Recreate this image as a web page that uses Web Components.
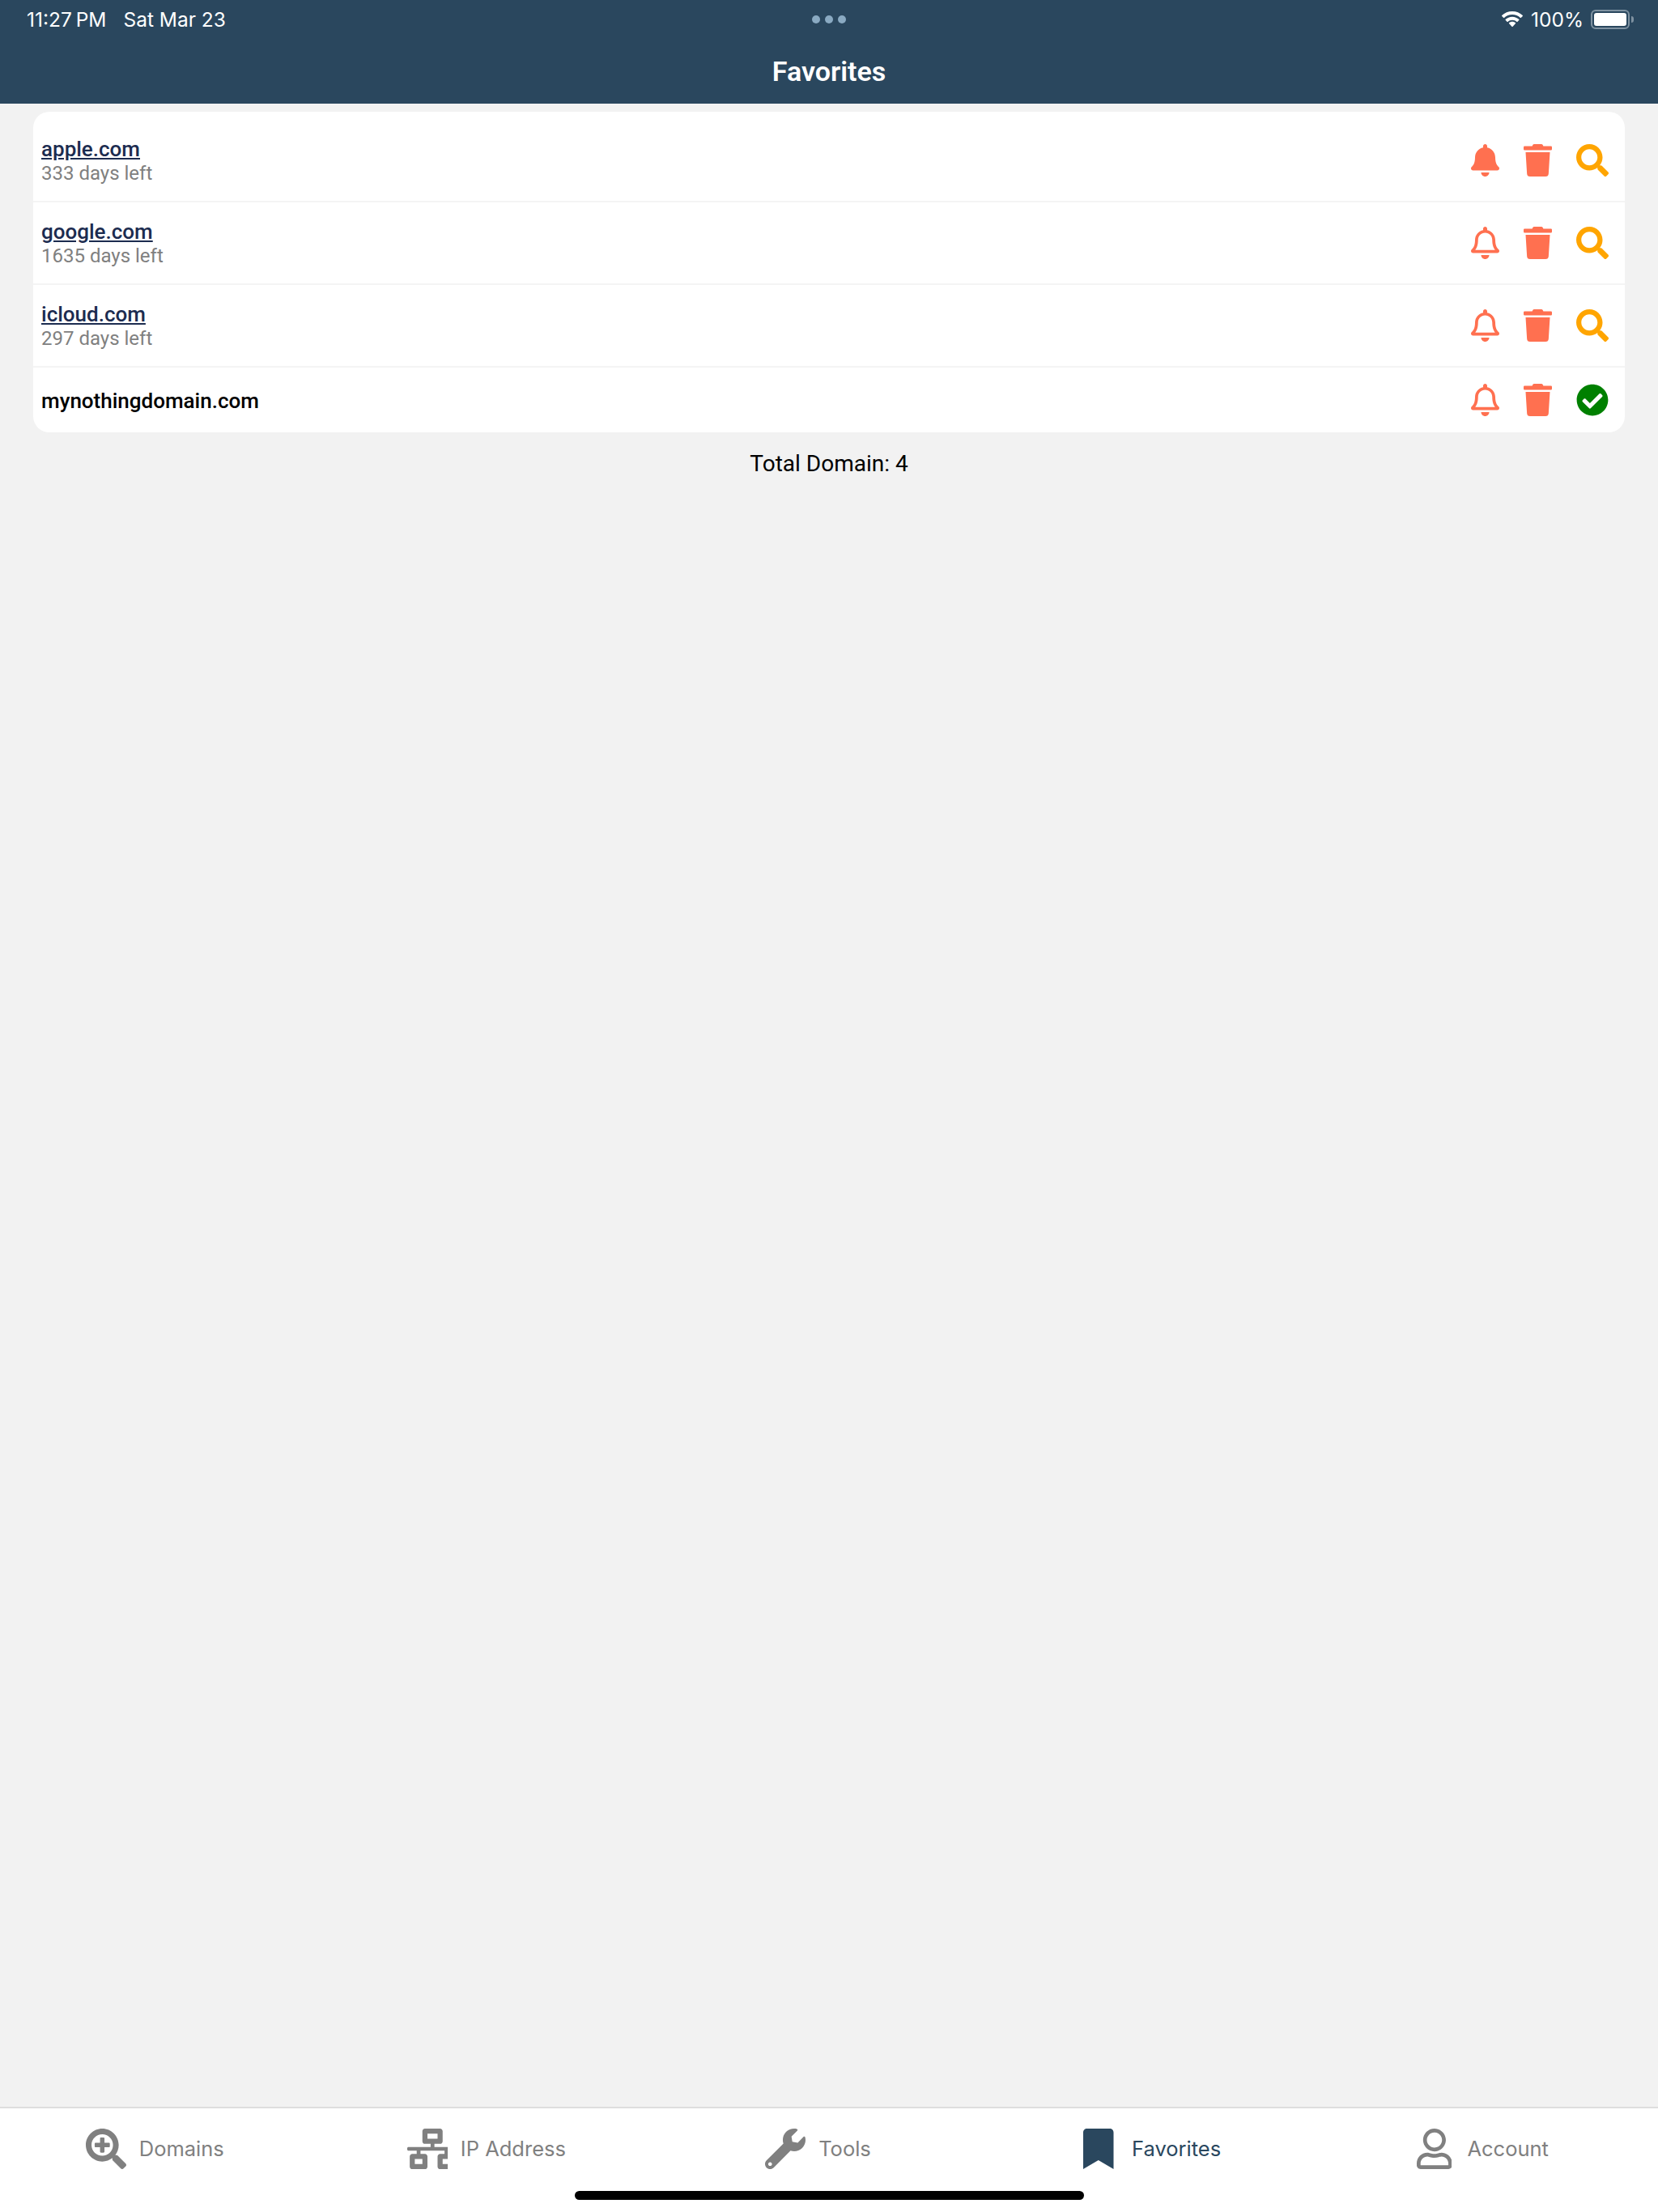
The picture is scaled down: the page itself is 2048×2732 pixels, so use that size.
<!DOCTYPE html>
<html lang="en">
<head>
<meta charset="utf-8">
<title>Favorites</title>
<style>
  html, body { margin: 0; height: 100%; background: #f2f2f2; }
  body { font-family: Roboto, "Liberation Sans", sans-serif; }
  app-shell { height: 2732px; }
</style>
</head>
<body>
<app-shell>
  <status-bar slot="top"></status-bar>
  <nav-title slot="top">Favorites</nav-title>

  <domain-list>
    <domain-row name="apple.com" days="333 days left" bell="solid" state="search"></domain-row>
    <domain-row name="google.com" days="1635 days left" bell="regular" state="search"></domain-row>
    <domain-row name="icloud.com" days="297 days left" bell="regular" state="search"></domain-row>
    <domain-row name="mynothingdomain.com" bell="regular" state="free"></domain-row>
  </domain-list>
  <total-line>Total Domain: 4</total-line>

  <tab-bar slot="bottom">
    <tab-item icon="search-plus">Domains</tab-item>
    <tab-item icon="network-wired">IP Address</tab-item>
    <tab-item icon="wrench">Tools</tab-item>
    <tab-item icon="bookmark" active>Favorites</tab-item>
    <tab-item icon="user">Account</tab-item>
  </tab-bar>
</app-shell>

<script>
// icon paths, all on a 512 high box
const ICONS = {
  "bell-solid": [448, "M224 512c35.32 0 63.97-28.65 63.97-64H160.03c0 35.35 28.65 64 63.97 64zm215.39-149.71c-19.32-20.76-55.47-51.99-55.47-154.29 0-77.7-54.48-139.9-127.94-155.16V32c0-17.67-14.32-32-31.98-32s-31.98 14.33-31.98 32v20.84C118.56 68.1 64.08 130.3 64.08 208c0 102.3-36.15 133.53-55.47 154.29-6 6.45-8.66 14.16-8.61 21.71.11 16.4 12.98 32 32.1 32h383.8c19.12 0 32-15.6 32.1-32 .05-7.55-2.61-15.27-8.61-21.71z"],
  "bell-regular": [448, "M439.39 362.29c-19.32-20.76-55.47-51.99-55.47-154.29 0-77.7-54.48-139.9-127.94-155.16V32c0-17.67-14.32-32-31.98-32s-31.98 14.33-31.98 32v20.84C118.56 68.1 64.08 130.3 64.08 208c0 102.3-36.15 133.53-55.47 154.29-6 6.45-8.66 14.16-8.61 21.71.11 16.4 12.98 32 32.1 32h383.8c19.12 0 32-15.6 32.1-32 .05-7.55-2.61-15.27-8.61-21.71zM67.53 368c21.22-27.97 44.42-74.33 44.53-159.42 0-.2-.06-.38-.06-.58 0-61.86 50.14-112 112-112s112 50.14 112 112c0 .2-.06.38-.06.58.11 85.1 23.31 131.46 44.53 159.42H67.53zM224 512c35.32 0 63.97-28.65 63.97-64H160.03c0 35.35 28.65 64 63.97 64z"],
  "trash": [448, "M432 32H312l-9.4-18.7A24 24 0 0 0 281.1 0H166.8a23.72 23.72 0 0 0-21.4 13.3L136 32H16A16 16 0 0 0 0 48v32a16 16 0 0 0 16 16h416a16 16 0 0 0 16-16V48a16 16 0 0 0-16-16zM53.2 467a48 48 0 0 0 47.9 45h245.8a48 48 0 0 0 47.9-45L416 128H32z"],
  "search": [512, "M505 442.7L405.3 343c-4.5-4.5-10.6-7-17-7H372c27.6-35.3 44-79.7 44-128C416 93.1 322.9 0 208 0S0 93.1 0 208s93.1 208 208 208c48.3 0 92.7-16.4 128-44v16.3c0 6.4 2.5 12.5 7 17l99.7 99.7c9.4 9.4 24.6 9.4 33.9 0l28.3-28.3c9.4-9.4 9.4-24.6.1-34zM208 336c-70.7 0-128-57.2-128-128 0-70.7 57.2-128 128-128 70.7 0 128 57.2 128 128 0 70.7-57.2 128-128 128z"],
  "check-circle": [512, "M504 256c0 136.967-111.033 248-248 248S8 392.967 8 256 119.033 8 256 8s248 111.033 248 248zM227.314 387.314l184-184c6.248-6.248 6.248-16.379 0-22.627l-22.627-22.627c-6.248-6.249-16.379-6.249-22.628 0L216 308.118l-70.059-70.059c-6.248-6.248-16.379-6.248-22.628 0l-22.627 22.627c-6.248 6.248-6.248 16.379 0 22.627l104 104c6.249 6.249 16.379 6.249 22.628.001z"],
  "search-plus": [512, "M304 192v32c0 6.6-5.4 12-12 12h-56v56c0 6.6-5.4 12-12 12h-32c-6.6 0-12-5.4-12-12v-56h-56c-6.6 0-12-5.4-12-12v-32c0-6.6 5.4-12 12-12h56v-56c0-6.6 5.4-12 12-12h32c6.6 0 12 5.4 12 12v56h56c6.6 0 12 5.4 12 12zm201 284.7L476.7 505c-9.4 9.4-24.6 9.4-33.9 0L343 405.3c-4.5-4.5-7-10.6-7-17V372c-35.3 27.6-79.7 44-128 44C93.1 416 0 322.9 0 208S93.1 0 208 0s208 93.1 208 208c0 48.3-16.4 92.7-44 128h16.3c6.4 0 12.5 2.5 17 7l99.7 99.7c9.3 9.4 9.3 24.6 0 34zM344 208c0-75.2-60.8-136-136-136S72 132.8 72 208s60.8 136 136 136 136-60.8 136-136z"],
  // wider than its box in the app, so it is cut off at 512
  "network-wired": [512, "M640 264v-16c0-8.84-7.16-16-16-16H344v-40h72c17.67 0 32-14.33 32-32V32c0-17.67-14.33-32-32-32H224c-17.67 0-32 14.33-32 32v128c0 17.67 14.33 32 32 32h72v40H16c-8.84 0-16 7.16-16 16v16c0 8.84 7.16 16 16 16h104v40H64c-17.67 0-32 14.33-32 32v128c0 17.67 14.33 32 32 32h160c17.67 0 32-14.33 32-32V352c0-17.67-14.33-32-32-32h-56v-40h304v40h-56c-17.67 0-32 14.33-32 32v128c0 17.67 14.33 32 32 32h160c17.67 0 32-14.33 32-32V352c0-17.67-14.33-32-32-32h-56v-40h104c8.84 0 16-7.16 16-16zM256 128V64h128v64H256zm-64 320H96v-64h96v64zm352 0h-96v-64h96v64z"],
  "wrench": [512, "M507.73 109.1c-2.24-9.03-13.54-12.09-20.12-5.51l-74.36 74.36-67.88-11.31-11.31-67.88 74.36-74.36c6.62-6.62 3.43-17.9-5.66-20.16-47.38-11.74-99.55.91-136.58 37.93-39.64 39.64-50.55 97.1-34.05 147.2L18.74 402.76c-24.99 24.99-24.99 65.51 0 90.5 24.99 24.99 65.51 24.99 90.5 0l213.21-213.21c50.12 16.71 107.47 5.68 147.37-34.22 37.07-37.07 49.7-89.32 37.91-136.73zM64 472c-13.25 0-24-10.75-24-24 0-13.26 10.75-24 24-24s24 10.74 24 24c0 13.25-10.75 24-24 24z"],
  "bookmark": [384, "M0 512V48C0 21.49 21.49 0 48 0h288c26.51 0 48 21.49 48 48v464L192 400 0 512z"],
  "user": [448, "M313.6 304c-28.7 0-42.5 16-89.6 16-47.1 0-60.8-16-89.6-16C60.2 304 0 364.2 0 438.4V464c0 26.5 21.5 48 48 48h352c26.5 0 48-21.5 48-48v-25.6c0-74.2-60.2-134.4-134.4-134.4zM400 464H48v-25.6c0-47.6 38.8-86.4 86.4-86.4 14.6 0 38.3 16 89.6 16 51.7 0 74.9-16 89.6-16 47.6 0 86.4 38.8 86.4 86.4V464zM224 288c79.5 0 144-64.5 144-144S303.5 0 224 0 80 64.5 80 144s64.5 144 144 144zm0-240c52.9 0 96 43.1 96 96s-43.1 96-96 96-96-43.1-96-96 43.1-96 96-96z"]
};

function iconSvg(name, height, color) {
  const [w, d] = ICONS[name];
  const width = w * height / 512;
  return `<svg width="${width}" height="${height}" viewBox="0 0 ${w} 512" fill="${color}" style="display:block;flex:none"><path d="${d}"/></svg>`;
}

class AppShell extends HTMLElement {
  constructor() {
    super();
    this.attachShadow({ mode: "open" });
    this.shadowRoot.innerHTML = `
      <style>
        :host { display: flex; flex-direction: column; }
        main { flex: 1; display: flex; flex-direction: column; min-height: 0; }
      </style>
      <slot name="top"></slot>
      <main><slot></slot></main>
      <slot name="bottom"></slot>
    `;
  }
}

class StatusBar extends HTMLElement {
  constructor() {
    super();
    this.attachShadow({ mode: "open" });
    this.shadowRoot.innerHTML = `
      <style>
        :host {
          display: grid;
          grid-template-columns: 1fr auto 1fr;
          align-items: center;
          height: 48px;
          padding: 0 33px;
          background: #2a475e;
          color: #fff;
          font: 400 24.5px Inter, "Liberation Sans", sans-serif;
        }
        .left { display: flex; gap: 21px; white-space: nowrap; }
        .time { word-spacing: -2px; }
        .dots { display: flex; gap: 6px; }
        .dots i { width: 10px; height: 10px; border-radius: 50%; background: #8aaac2; }
        .right { display: flex; align-items: center; justify-content: flex-end; gap: 9px; }
        .batt { position: relative; width: 48px; height: 24px; box-sizing: border-box; border: 2px solid #7f92a1; border-radius: 6px; padding: 2px; margin-right: 2px; }
        .batt b { display: block; height: 100%; background: #fff; border-radius: 3px; }
        .batt::after { content: ""; position: absolute; right: -7px; top: 6px; width: 3px; height: 8px; background: #7f92a1; border-radius: 0 3px 3px 0; }
      </style>
      <div class="left"><span class="time">11:27 PM</span><span>Sat Mar 23</span></div>
      <div class="dots"><i></i><i></i><i></i></div>
      <div class="right">
        <svg width="28" height="20" viewBox="0 0 28 20" fill="#fff"><path d="M14 4.100c3.900 0 7.400 1.500 10 4 .2.200.5.200.7 0l2.100-2.200c.2-.2.2-.6 0-.8C23.500 1.900 19 0 14 0S4.500 1.900 1.200 5.100c-.2.200-.2.600 0 .8l2.100 2.200c.2.200.5.200.7 0 2.600-2.500 6.100-4 10-4z"/><path d="M14 10.800c2.100 0 4.100.8 5.600 2.200.2.200.5.200.7 0l2.100-2.200c.2-.2.2-.6 0-.8C20.200 8 17.200 6.700 14 6.700S7.800 8 5.600 10c-.2.200-.2.600 0 .8L7.700 13c.2.200.5.200.7 0 1.500-1.400 3.500-2.200 5.600-2.200z"/><path d="M18 15.100c.2-.2.2-.6 0-.8-1.100-1-2.500-1.500-4-1.500s-2.900.5-4 1.500c-.2.200-.2.600 0 .8l3.700 3.800c.2.200.500.200.700 0z"/></svg>
        <span>100%</span>
        <div class="batt"><b></b></div>
      </div>
    `;
  }
}

class NavTitle extends HTMLElement {
  constructor() {
    super();
    this.attachShadow({ mode: "open" });
    this.shadowRoot.innerHTML = `
      <style>
        :host {
          display: flex;
          justify-content: center;
          align-items: center;
          height: 80px;
          box-sizing: border-box;
          background: #2a475e;
          color: #fff;
          font: 600 34px Roboto, sans-serif;
        }
      </style>
      <slot></slot>
    `;
  }
}

class DomainList extends HTMLElement {
  constructor() {
    super();
    this.attachShadow({ mode: "open" });
    this.shadowRoot.innerHTML = `
      <style>
        :host {
          display: block;
          margin: 10px 41px 0;
          padding-top: 10px;
          background: #fff;
          border-radius: 20px;
        }
      </style>
      <slot></slot>
    `;
  }
}

class DomainRow extends HTMLElement {
  connectedCallback() {
    if (this.shadowRoot) return;
    this.attachShadow({ mode: "open" });
    const name = this.getAttribute("name");
    const days = this.getAttribute("days");
    const bell = this.getAttribute("bell") || "regular";
    const free = this.getAttribute("state") === "free";
    const title = days ? `<a href="#">${name}</a><small>${days}</small>` : `<span>${name}</span>`;
    this.shadowRoot.innerHTML = `
      <style>
        :host {
          display: flex;
          align-items: center;
          justify-content: space-between;
          padding: 20px 20px 20px 10px;
          border-bottom: 2px solid #f4f4f4;
        }
        :host(:last-child) { border-bottom: 0; }
        .text { display: flex; flex-direction: column; }
        a, span { font: 500 26px/32px Roboto, sans-serif; }
        a { color: #1c2c50; text-decoration: underline; }
        span { color: #000; padding-top: 2px; }
        small { font: 400 24px/28px Roboto, sans-serif; color: #808080; }
        .actions { display: flex; align-items: center; gap: 30px; }
      </style>
      <div class="text">${title}</div>
      <div class="actions">
        ${iconSvg("bell-" + bell, 40, "#ff7050")}
        ${iconSvg("trash", 40, "#ff7050")}
        ${free ? iconSvg("check-circle", 40, "#008000") : iconSvg("search", 40, "#ffa500")}
      </div>
    `;
  }
}

class TotalLine extends HTMLElement {
  constructor() {
    super();
    this.attachShadow({ mode: "open" });
    this.shadowRoot.innerHTML = `
      <style>
        :host {
          display: block;
          margin-top: 23px;
          text-align: center;
          color: #000;
          font: 400 28px/32px Roboto, sans-serif;
        }
      </style>
      <slot></slot>
    `;
  }
}

class TabBar extends HTMLElement {
  constructor() {
    super();
    this.attachShadow({ mode: "open" });
    this.shadowRoot.innerHTML = `
      <style>
        :host {
          display: block;
          position: relative;
          height: 130px;
          box-sizing: border-box;
          background: #fff;
          border-top: 2px solid #dedede;
        }
        .tabs { display: grid; grid-template-columns: repeat(5, 1fr); padding-top: 25px; }
        .home { position: absolute; left: 710px; top: 102px; width: 629px; height: 11px; border-radius: 6px; background: #000; }
      </style>
      <div class="tabs"><slot></slot></div>
      <div class="home"></div>
    `;
  }
}

class TabItem extends HTMLElement {
  connectedCallback() {
    if (this.shadowRoot) return;
    this.attachShadow({ mode: "open" });
    const color = this.hasAttribute("active") ? "#2a475e" : "#808080";
    this.shadowRoot.innerHTML = `
      <style>
        :host {
          display: flex;
          align-items: center;
          justify-content: center;
          gap: 16px;
          height: 50px;
          padding-right: 27px;
          color: ${color};
          font: 400 25.5px Inter, "Liberation Sans", sans-serif;
        }
        .box { width: 50px; display: flex; justify-content: center; }
        .label { padding-bottom: 2px; }
      </style>
      <div class="box">${iconSvg(this.getAttribute("icon"), 50, color)}</div>
      <span class="label"><slot></slot></span>
    `;
  }
}

customElements.define("app-shell", AppShell);
customElements.define("status-bar", StatusBar);
customElements.define("nav-title", NavTitle);
customElements.define("domain-list", DomainList);
customElements.define("domain-row", DomainRow);
customElements.define("total-line", TotalLine);
customElements.define("tab-bar", TabBar);
customElements.define("tab-item", TabItem);
</script>
</body>
</html>
